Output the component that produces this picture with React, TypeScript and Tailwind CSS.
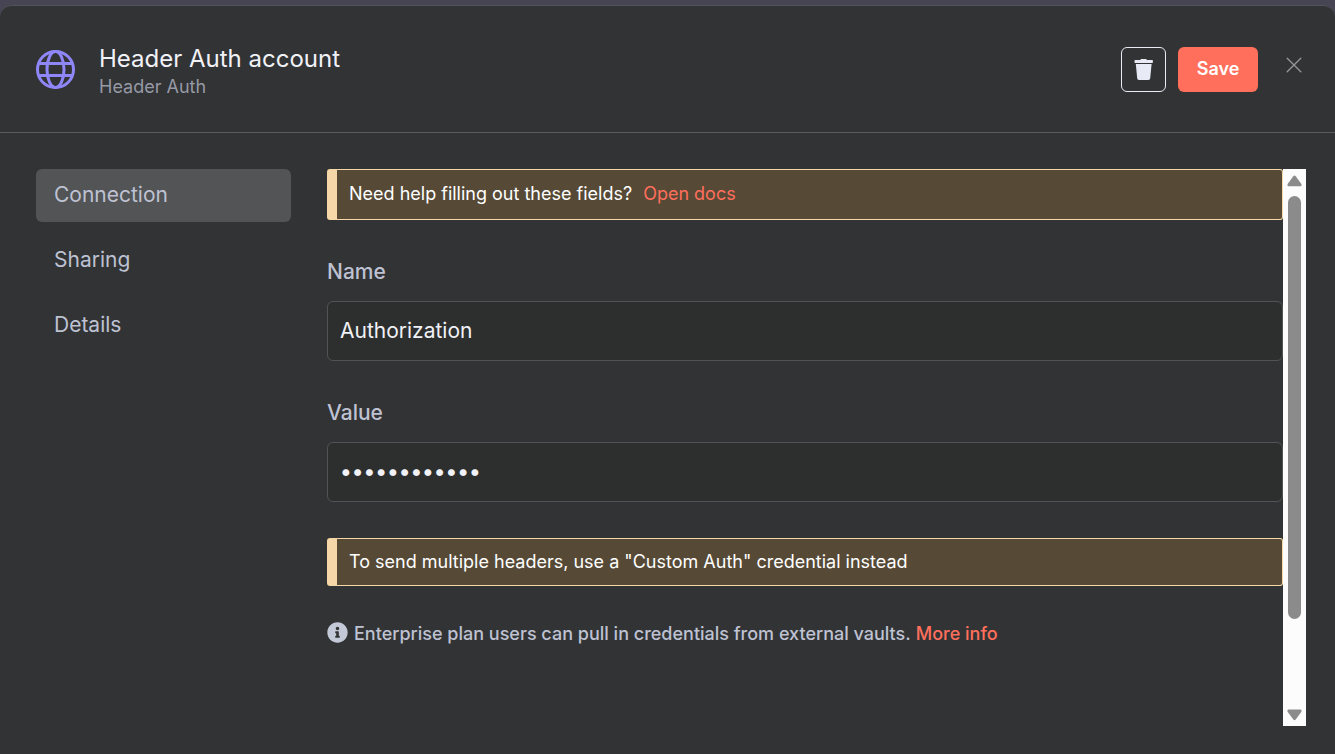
import { useState } from 'react';
import type { ReactNode } from 'react';
import { FaInfoCircle } from 'react-icons/fa';

const tabs = ['Connection', 'Sharing', 'Details'];

function GlobeIcon() {
  return (
    <svg className="size-10 shrink-0" viewBox="0 0 40 40" fill="none" stroke="#8f87f7" strokeWidth="3" aria-hidden="true">
      <circle cx="19.5" cy="19.5" r="18" />
      <ellipse cx="19.5" cy="19.5" rx="8.5" ry="18" />
      <path d="M3 13.5h33M3 25.5h33" />
    </svg>
  );
}

function TrashIcon() {
  return (
    <svg className="h-6 w-5" viewBox="0 0 20 24" fill="#e8eaf6" aria-hidden="true">
      <path d="M1.2 2H6.3L7 1H12.2L12.9 2H18.2C18.6 2 18.9 2.3 18.9 2.7V4.3C18.9 4.7 18.6 5 18.2 5H1.2C.8 5 .5 4.7 .5 4.3V2.7C.5 2.3 .8 2 1.2 2Z" />
      <path d="M1.8 6H17.6L16.2 20.3C16.1 21.3 15.4 22 14.4 22H5C4 22 3.3 21.3 3.2 20.3Z" />
    </svg>
  );
}

function Banner({ className, children }: { className: string; children: ReactNode }) {
  return (
    <div className={`flex items-center rounded-[3px] border border-l-10 border-[#f5d7a8] bg-[#564936] px-3 text-lg text-white ${className}`}>
      {children}
    </div>
  );
}

function Field({ id, label, type, initial }: { id: string; label: string; type: string; initial: string }) {
  const [value, setValue] = useState(initial);
  return (
    <div className="flex flex-col gap-[13px]">
      <label htmlFor={id} className="text-[21px] leading-8 font-medium text-[#bec2d2]">
        {label}
      </label>
      <input
        id={id}
        type={type}
        value={value}
        autoComplete="off"
        onChange={(e) => setValue(e.target.value)}
        className={`h-[60px] w-full rounded-md border border-[#525355] bg-[#2d2f2e] px-3 pb-0.5 text-[#f1f2f7] outline-none ${type === 'password' ? 'text-[22px] font-medium' : 'text-[21px]'}`}
      />
    </div>
  );
}

function ScrollRail() {
  return (
    <div className="flex w-[23px] shrink-0 flex-col items-center bg-[#fcfcfc]" aria-hidden="true">
      <svg className="h-[27px] w-[23px] shrink-0" viewBox="0 0 23 27" fill="#8b8b8b">
        <path d="M10.3 7.2Q11.5 5.8 12.7 7.2L18.4 15.1Q19.2 17.3 17.5 17.3H5.5Q3.8 17.3 4.6 15.1Z" />
      </svg>
      <div className="w-[13px] flex-[423] rounded-full bg-[#8b8b8b]" />
      <div className="flex-[80]" />
      <svg className="h-[27px] w-[23px] shrink-0" viewBox="0 0 23 27" fill="#8b8b8b">
        <path d="M10.3 20.6Q11.5 22 12.7 20.6L18.4 12.7Q19.2 10.5 17.5 10.5H5.5Q3.8 10.5 4.6 12.7Z" />
      </svg>
    </div>
  );
}

export default function App() {
  const [active, setActive] = useState('Connection');
  return (
    <div className="flex min-h-screen flex-col bg-[#474554] pt-[5px] font-[Inter,sans-serif]">
      <div className="flex grow flex-col rounded-t-xl border-t border-[#525355] bg-[#323335]">
        <header className="flex items-start border-b border-[#5a5b5d] pt-[41px] pr-[33px] pb-[33px] pl-9">
          <div className="flex grow items-start gap-[23px]">
            <div className="pt-[3px]">
              <GlobeIcon />
            </div>
            <div>
              <h1 className="text-2xl leading-6 text-[#f1f2f7]">Header Auth account</h1>
              <p className="mt-1 text-lg leading-6 text-[#969aa5]">Header Auth</p>
            </div>
          </div>
          <button type="button" aria-label="Delete" className="flex size-[45px] items-center justify-center rounded-md border border-[#e8eaf6]">
            <TrashIcon />
          </button>
          <button type="button" className="ml-3 h-[45px] w-20 rounded-md bg-[#ff6f5c] pb-0.5 text-lg font-semibold text-white">
            Save
          </button>
          <button type="button" aria-label="Close" className="mt-2.5 ml-7 flex h-4 w-4 items-center justify-center">
            <svg className="size-4" viewBox="0 0 16 16" fill="none" stroke="#96979b" strokeWidth="1.3" strokeLinecap="round" aria-hidden="true">
              <path d="M1.2 1.2l13.6 13.6M14.8 1.2L1.2 14.8" />
            </svg>
          </button>
        </header>
        <div className="flex grow gap-9 pt-9 pr-[29px] pb-7 pl-9">
          <nav className="flex w-[255px] shrink-0 flex-col gap-3">
            {tabs.map((tab) => (
              <button
                key={tab}
                type="button"
                onClick={() => setActive(tab)}
                className={`h-[53px] rounded-md px-[18px] pb-0.5 text-left text-[21px] text-[#bec2d2] ${active === tab ? 'bg-[#535456]' : ''}`}
              >
                {tab}
              </button>
            ))}
          </nav>
          <div className="flex grow">
            <main className="flex min-w-0 grow flex-col gap-9">
              <Banner className="h-[51px] pb-0.5">
                <span>Need help filling out these fields?</span>
                <a href="#docs" className="ml-[11px] text-[#ff6f5c]">Open docs</a>
              </Banner>
              <Field id="name" label="Name" type="text" initial="Authorization" />
              <Field id="value" label="Value" type="password" initial="••••••••••••" />
              <Banner className="h-12">To send multiple headers, use a "Custom Auth" credential instead</Banner>
              <p className="flex items-start text-lg leading-6 font-medium text-[#bec2d2]">
                <FaInfoCircle className="mr-1.5 size-[21px] text-[#c4c9d8]" />
                Enterprise plan users can pull in credentials from external vaults.
                <a href="#more" className="ml-[5px] text-[#ff6f5c]">More info</a>
              </p>
            </main>
            <ScrollRail />
          </div>
        </div>
      </div>
    </div>
  );
}
